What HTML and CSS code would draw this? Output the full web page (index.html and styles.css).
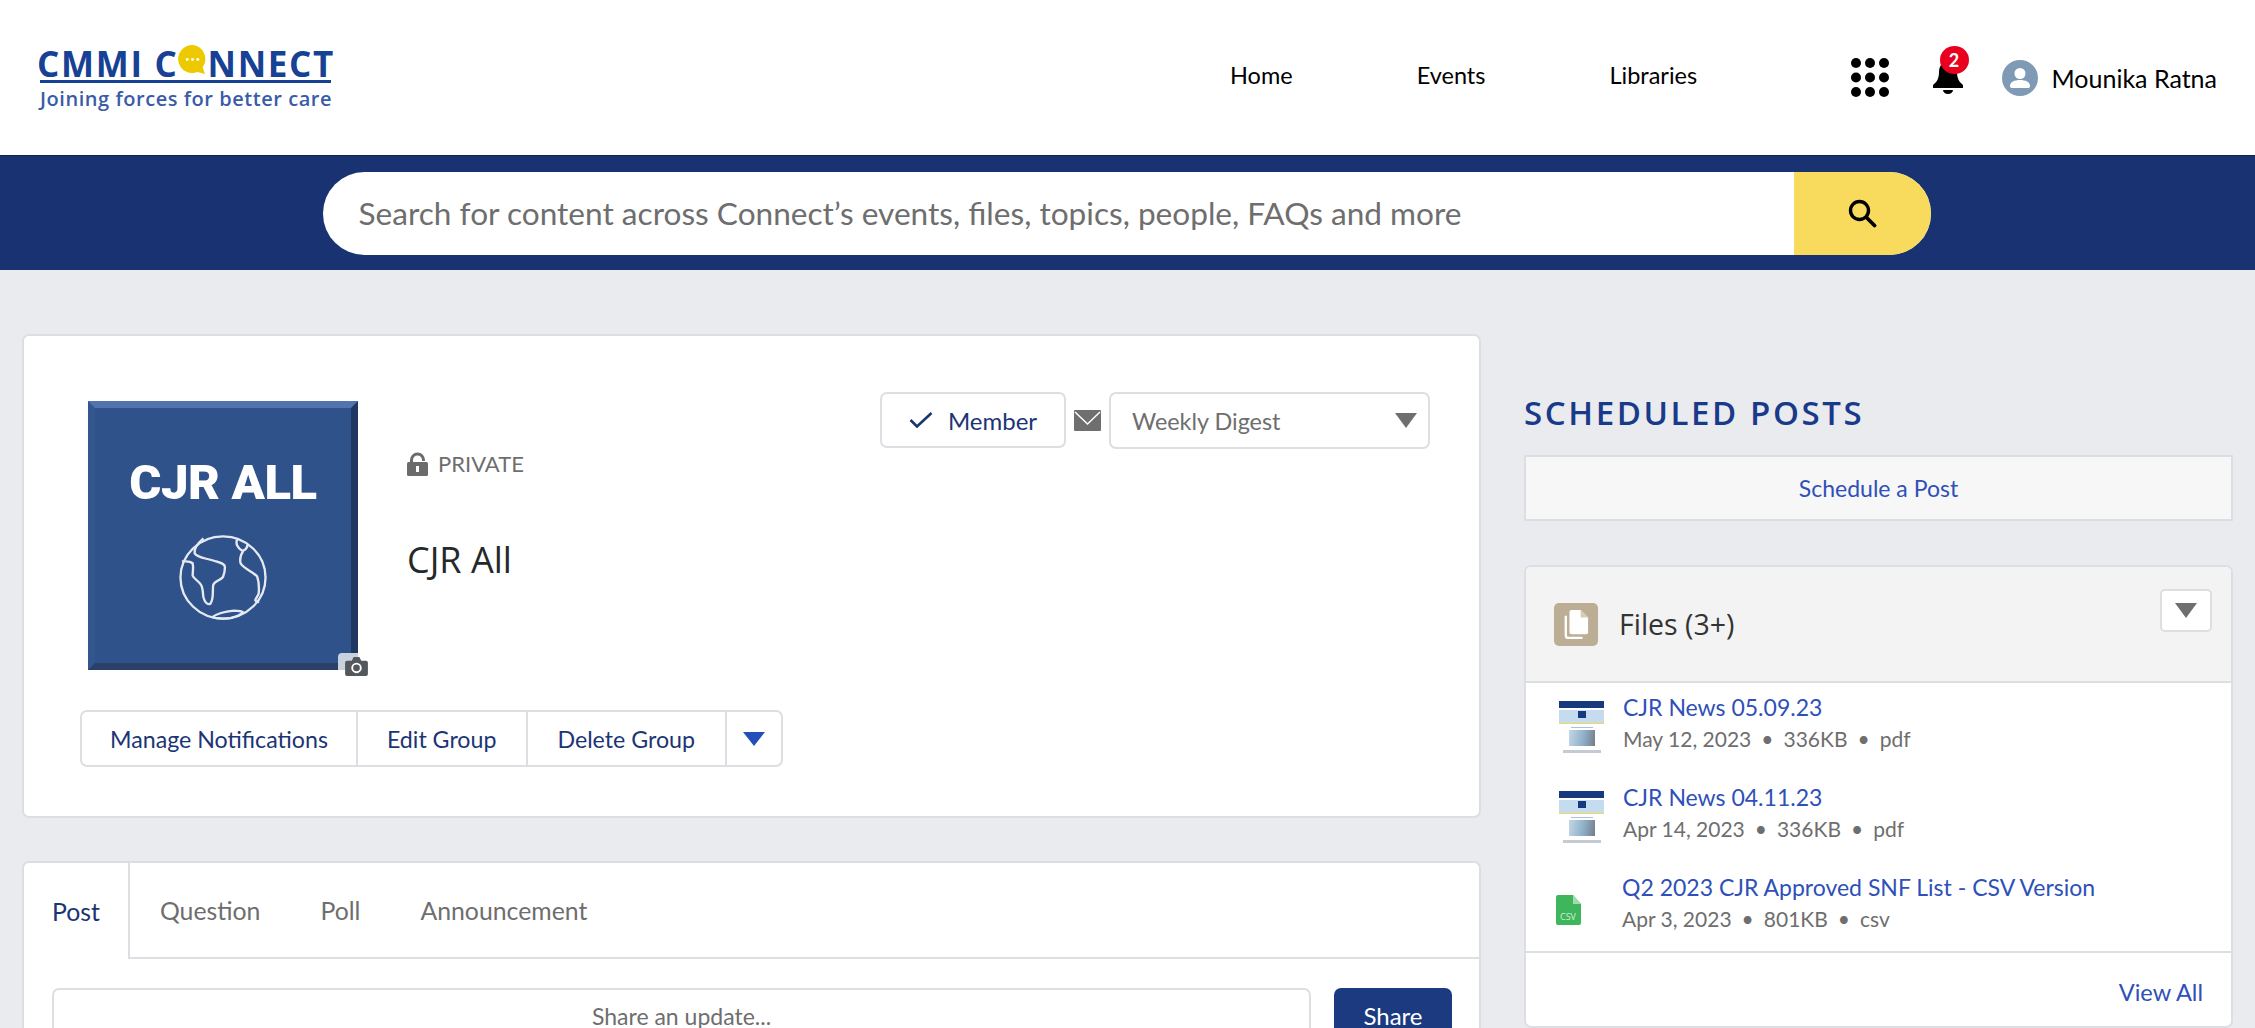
FILE: index.html
```html
<!DOCTYPE html>
<html lang="en">
<head>
  <meta charset="UTF-8">
  <title>CJR All | CMMI Connect</title>
  <link rel="stylesheet" href="styles.css">
</head>
<body>
  <header class="topbar">
    <a class="logo">
      <span class="logo-name">CMMI C<span class="logo-o"><svg viewBox="0 0 30 30" width="29" height="29"><path d="M15 0a14.500 14.500 0 1 0 5 28l8 2-2.500-7A14.500 14.500 0 0 0 15 0z" fill="#edc900"/><circle cx="9.500" cy="15" r="1.500" fill="#fff"/><circle cx="15" cy="15" r="1.500" fill="#fff"/><circle cx="20.500" cy="15" r="1.500" fill="#fff"/></svg></span>NNECT</span>
      <span class="logo-tag">Joining forces for better care</span>
    </a>
    <nav class="nav">
      <a>Home</a>
      <a>Events</a>
      <a>Libraries</a>
    </nav>
    <div class="tools">
      <svg class="waffle" viewBox="0 0 38 39" width="38" height="39">
        <g fill="#000">
          <circle cx="5" cy="5" r="5"/><circle cx="19" cy="5" r="5"/><circle cx="33" cy="5" r="5"/>
          <circle cx="5" cy="19.500" r="5"/><circle cx="19" cy="19.500" r="5"/><circle cx="33" cy="19.500" r="5"/>
          <circle cx="5" cy="34" r="5"/><circle cx="19" cy="34" r="5"/><circle cx="33" cy="34" r="5"/>
        </g>
      </svg>
      <span class="bell">
        <svg viewBox="0 0 30 33" width="30" height="33"><path d="M15 1c-6 0-9 4-9 10 0 6-2 10-6 13v3h30v-3c-4-3-6-7-6-13 0-6-3-10-9-10z" fill="#000"/><path d="M10 29h10c0 2-2 4-5 4s-5-2-5-4z" fill="#000"/></svg>
        <span class="badge">2</span>
      </span>
      <span class="user">
        <svg viewBox="0 0 36 36" width="36" height="36"><circle cx="18" cy="18" r="18" fill="#7f9ab5"/><circle cx="18" cy="13.500" r="5.500" fill="#fff"/><path d="M8 26c0-4 4.500-6 10-6s10 2 10 6c0 1.500-1 2-2 2H10c-1 0-2-.5-2-2z" fill="#fff"/></svg>
        Mounika Ratna
      </span>
    </div>
  </header>

  <div class="searchbar">
    <div class="search">
      <span class="search-text">Search for content across Connect’s events, files, topics, people, FAQs and more</span>
      <button class="search-btn">
        <svg viewBox="0 0 30 30" width="30" height="30"><circle cx="12.500" cy="12.500" r="9" fill="none" stroke="#000" stroke-width="3.400"/><path d="M19.500 19.500l8 8" stroke="#000" stroke-width="3.800" stroke-linecap="round"/></svg>
      </button>
    </div>
  </div>

  <main class="page">
    <section class="left">
      <div class="card group-card">
        <div class="group-top">
          <div class="group-pic">
            <div class="pic">
              <div class="pic-title">CJR ALL</div>
              <svg class="globe" viewBox="0 0 90 90" width="88" height="85" preserveAspectRatio="none" fill="none" stroke="#e4e9f2" stroke-width="2.400">
                <circle cx="45" cy="45" r="43.500"/>
                <path d="M25 3.500C20 8 15 14 16 19.500c3 5 12 5 19 7.500 6 2 12 3 12 7 0 5-1 8-2 10.500-3 4-9 4-10 8.500-1 6 1 14-3 20-4 1-6-3-7-7-1-5 0-10-3-14-3-4-7-6-8-9 0-5 1-8 0-13-3-3-7-2-11-2"/>
                <path d="M60 3.500c-2 4-1 7 0 8.500 2 4 5 5 7 4 3-2 3-4 3-6M66 16c-3 5-4 10-3 14 3 6 12 8 17 14 2 6 2 12 1.500 18-1 3-3 5-3.500 7 1 2 2 2 4 2"/>
                <path d="M34 87c5-4 12-6 22-7 4 0 8 0 10 2-4 3-8 5-13 6-7 1-13 1-19-1z"/>
              </svg>
            </div>
            <span class="cam-bg"></span>
            <svg class="cam" viewBox="0 0 24 20" width="23" height="19"><path d="M2 4h5l2-4h6l2 4h5a2 2 0 0 1 2 2v12a2 2 0 0 1-2 2H2a2 2 0 0 1-2-2V6a2 2 0 0 1 2-2z" fill="#54585c"/><circle cx="12" cy="11.500" r="4.500" fill="none" stroke="#fff" stroke-width="2"/></svg>
          </div>
          <div class="group-info">
            <div class="private">
              <svg viewBox="0 0 21 24" width="21" height="24"><path d="M4.500 11V8a6 6 0 0 1 12 0v1" fill="none" stroke="#6b6b6b" stroke-width="3"/><rect x="0" y="10" width="21" height="14" rx="1.500" fill="#6b6b6b"/><path d="M9 14h3v6H9z" fill="#fff"/></svg>
              PRIVATE
            </div>
            <h1 class="group-name">CJR All</h1>
          </div>
          <div class="member-row">
            <button class="btn member-btn">
              <svg viewBox="0 0 24 16" width="24" height="16"><path d="M1.500 8l6.500 6.500L22.500 1" fill="none" stroke="#1b3574" stroke-width="2.600"/></svg>
              Member
            </button>
            <svg class="mail" viewBox="0 0 27 21" width="27" height="21"><rect width="27" height="21" rx="1" fill="#6f6f6f"/><path d="M1 2l12.500 12L26 2" fill="none" stroke="#fff" stroke-width="1.500"/></svg>
            <div class="digest">
              <span>Weekly Digest</span>
              <span class="caret"></span>
            </div>
          </div>
        </div>
        <div class="btn-group">
          <a>Manage Notifications</a>
          <a>Edit Group</a>
          <a>Delete Group</a>
          <a class="more"><span class="caret caret-blue"></span></a>
        </div>
      </div>

      <div class="card post-card">
        <div class="tabs">
          <a class="tab active">Post</a>
          <a class="tab">Question</a>
          <a class="tab">Poll</a>
          <a class="tab">Announcement</a>
          <span class="tab-fill"></span>
        </div>
        <div class="share-row">
          <div class="share-box">Share an update...</div>
          <button class="share-btn">Share</button>
        </div>
      </div>
    </section>

    <aside class="right">
      <h2 class="side-title">SCHEDULED POSTS</h2>
      <a class="schedule">Schedule a Post</a>

      <div class="card files-card">
        <div class="files-head">
          <span class="files-icon">
            <svg viewBox="0 0 28 32" width="26" height="30"><path d="M9 1h10l8 8v16a2 2 0 0 1-2 2H9a2 2 0 0 1-2-2V3a2 2 0 0 1 2-2z" fill="#fff"/><path d="M19 1v8h8z" fill="#d8ccb5"/><path d="M3 7v21a3 3 0 0 0 3 3h15" fill="none" stroke="#fff" stroke-width="2.500"/></svg>
          </span>
          <span class="files-title">Files (3+)</span>
          <button class="files-menu"><span class="caret"></span></button>
        </div>
        <ul class="files">
          <li class="file">
            <div class="thumb">
              <div class="thumb-head"></div>
              <div class="thumb-band"><i></i></div>
              <div class="thumb-line"></div>
              <div class="thumb-pic"></div>
              <div class="thumb-foot"></div>
            </div>
            <div>
              <a class="file-name">CJR News 05.09.23</a>
              <div class="file-meta"><span>May 12, 2023</span><span>336KB</span><span>pdf</span></div>
            </div>
          </li>
          <li class="file">
            <div class="thumb">
              <div class="thumb-head"></div>
              <div class="thumb-band"><i></i></div>
              <div class="thumb-line"></div>
              <div class="thumb-pic"></div>
              <div class="thumb-foot"></div>
            </div>
            <div>
              <a class="file-name">CJR News 04.11.23</a>
              <div class="file-meta"><span>Apr 14, 2023</span><span>336KB</span><span>pdf</span></div>
            </div>
          </li>
          <li class="file">
            <div class="thumb-csv">
              <svg viewBox="0 0 25 30" width="25" height="30"><path d="M2 0h15l8 9v19a2 2 0 0 1-2 2H2a2 2 0 0 1-2-2V2a2 2 0 0 1 2-2z" fill="#3fb65b"/><path d="M17 0l8 9h-8z" fill="#9fdcae"/><text x="12" y="25" class="csv-label">CSV</text></svg>
            </div>
            <div>
              <a class="file-name">Q2 2023 CJR Approved SNF List - CSV Version</a>
              <div class="file-meta"><span>Apr 3, 2023</span><span>801KB</span><span>csv</span></div>
            </div>
          </li>
        </ul>
        <div class="files-foot"><a>View All</a></div>
      </div>
    </aside>
  </main>
</body>
</html>
```

FILE: styles.css
```css
* {
  box-sizing: border-box;
}

html,
body {
  height: 1028px;
  overflow: hidden;
}

body {
  margin: 0;
  background: #e9ebef;
  font-family: Lato, sans-serif;
  font-size: 23px;
  color: #000;
}

a {
  text-decoration: none;
}

button {
  font-family: inherit;
  cursor: pointer;
}

/* header */
.topbar {
  height: 155px;
  background: #fff;
  display: flex;
  align-items: center;
  padding: 0 38px 0 37px;
}

.logo {
  width: 298px;
  display: flex;
  flex-direction: column;
  font-family: "Open Sans", sans-serif;
  color: #164194;
}

.logo-name {
  display: flex;
  align-items: center;
  height: 39px;
  font-size: 35px;
  font-weight: 700;
  letter-spacing: 1.700px;
  white-space: nowrap;
  position: relative;
}

.logo-name::after {
  content: "";
  position: absolute;
  left: 3px;
  right: 4px;
  bottom: 0;
  height: 3px;
  background: #164194;
}

.logo-o {
  display: flex;
  margin-top: -7px;
}

.logo-tag {
  margin: 2px 0 0 3px;
  font-size: 20px;
  font-weight: 600;
  letter-spacing: 0.550px;
  color: #3a5ca8;
  white-space: nowrap;
}

.nav {
  margin-left: 895px;
  display: flex;
  gap: 124px;
  font-size: 23.500px;
}

.nav a {
  color: #000;
  margin-top: -6px;
}

.tools {
  margin-left: auto;
  display: flex;
  align-items: center;
}

.bell {
  position: relative;
  display: flex;
  margin-left: 44px;
}

.badge {
  position: absolute;
  top: -15px;
  left: 7px;
  width: 29px;
  height: 28px;
  border-radius: 50%;
  background: #ea001e;
  color: #fff;
  font-size: 18px;
  font-weight: 700;
  display: flex;
  align-items: center;
  justify-content: center;
}

.user {
  display: flex;
  align-items: center;
  gap: 14px;
  margin-left: 39px;
  font-size: 25px;
}

/* search */
.searchbar {
  height: 115px;
  background: #193372;
  border-top: 1px solid #10224f;
  display: flex;
  justify-content: center;
  align-items: center;
  padding-right: 2px;
}

.search {
  width: 1608px;
  height: 83px;
  background: #fff;
  border-radius: 42px;
  overflow: hidden;
  display: flex;
  align-items: center;
}

.search-text {
  flex: 1;
  padding-left: 36px;
  font-size: 31.600px;
  color: #6e6e6e;
}

.search-btn {
  width: 137px;
  height: 100%;
  border: none;
  background: #f8da5c;
  display: flex;
  align-items: center;
  justify-content: center;
  padding: 0;
}

/* page */
.page {
  height: 758px;
  overflow: hidden;
  display: flex;
  align-items: flex-start;
  padding: 64px 22px 0 22px;
}

.left {
  width: 1459px;
  flex-shrink: 0;
}

.card {
  background: #fff;
  border: 2px solid #dcdee2;
  border-radius: 7px;
}

.group-card {
  height: 484px;
  padding: 56px 49px 0 64px;
}

.group-top {
  display: flex;
  align-items: flex-start;
  height: 318px;
}

.group-pic {
  position: relative;
  width: 270px;
  height: 269px;
  margin-top: 9px;
  flex-shrink: 0;
}

.pic {
  width: 270px;
  height: 269px;
  background: #2f528b;
  border: 7px solid;
  border-color: #5273ad #1f3761 #2a4068 #33568f;
  display: flex;
  flex-direction: column;
  align-items: center;
  color: #fff;
}

.pic-title {
  margin-top: 47px;
  font-family: Roboto, sans-serif;
  font-weight: 900;
  font-size: 49px;
  letter-spacing: -0.4px;
  line-height: 56px;
  white-space: nowrap;
}

.globe {
  margin-top: 24px;
}

.cam-bg {
  position: absolute;
  right: 0;
  bottom: 0;
  width: 20px;
  height: 17px;
  background: #c9d1df;
  border-radius: 4px 0 0 0;
}

.cam {
  position: absolute;
  right: -10px;
  bottom: -6px;
}

.group-info {
  margin-left: 49px;
}

.private {
  margin-top: 60px;
  display: flex;
  align-items: center;
  gap: 10px;
  font-size: 22px;
  line-height: 24px;
  color: #6e6e6e;
}

.group-name {
  margin: 59px 0 0 0;
  font-family: "Open Sans", sans-serif;
  font-size: 36px;
  font-weight: 400;
  line-height: 50px;
  color: #26282a;
}

.member-row {
  margin-left: auto;
  display: flex;
  align-items: flex-start;
}

.btn {
  background: #fff;
  border: 2px solid #dcdee2;
  border-radius: 7px;
}

.member-btn {
  width: 186px;
  height: 56px;
  display: flex;
  align-items: center;
  justify-content: center;
  gap: 15px;
  font-size: 24px;
  color: #1b3574;
}

.mail {
  margin: 18px 8px 0;
}

.digest {
  width: 321px;
  height: 57px;
  border: 2px solid #dcdee2;
  border-radius: 7px;
  display: flex;
  align-items: center;
  justify-content: space-between;
  padding: 0 11px 0 21px;
  font-size: 23.400px;
  color: #6e6e6e;
}

.caret {
  width: 0;
  height: 0;
  border-left: 11px solid transparent;
  border-right: 11px solid transparent;
  border-top: 15px solid #6f6f6f;
}

.caret-blue {
  border-top-color: #2350b8;
  border-top-width: 14px;
}

.btn-group {
  display: inline-flex;
  height: 57px;
  border: 2px solid #dcdee2;
  border-radius: 7px;
  margin-left: -8px;
}

.btn-group a {
  display: flex;
  align-items: center;
  padding: 0 30px 0 29px;
  color: #1b3574;
  font-size: 23.200px;
  border-left: 2px solid #dcdee2;
}

.btn-group a:first-child {
  padding: 0 28px;
  border-left: none;
}

.btn-group .more {
  padding: 0 16px;
}

.post-card {
  margin-top: 43px;
  height: 167px;
  border-bottom: none;
  border-radius: 7px 7px 0 0;
}

.tabs {
  display: flex;
  height: 96px;
}

.tab {
  display: flex;
  align-items: center;
  padding: 0 30px;
  color: #6e6e6e;
  font-size: 24.800px;
  border-bottom: 2px solid #dcdee2;
}

.tab.active {
  padding: 0 28px;
  color: #1b3574;
  border-bottom: none;
  border-right: 2px solid #dcdee2;
}

.tab-fill {
  flex: 1;
  border-bottom: 2px solid #dcdee2;
}

.share-row {
  display: flex;
  gap: 23px;
  padding: 29px 27px 0 28px;
}

.share-box {
  flex: 1;
  height: 40px;
  padding-top: 15px;
  border: 2px solid #dcdee2;
  border-bottom: none;
  border-radius: 7px 7px 0 0;
  text-align: center;
  line-height: 23px;
  color: #6e6e6e;
  font-size: 23px;
}

.share-btn {
  width: 118px;
  height: 40px;
  padding: 16px 0 0;
  border: none;
  border-radius: 7px 7px 0 0;
  background: #1b3a80;
  color: #fff;
  line-height: 24px;
  font-size: 24px;
}

/* right column */
.right {
  margin-left: 43px;
  flex: 1;
}

.side-title {
  margin: 58px 0 0 0;
  font-family: "Open Sans", sans-serif;
  font-size: 33px;
  font-weight: 600;
  letter-spacing: 2.600px;
  line-height: 42px;
  white-space: nowrap;
  color: #193a8a;
}

.schedule {
  display: block;
  margin-top: 21px;
  height: 66px;
  background: #f7f7f7;
  border: 2px solid #dcdee2;
  text-align: center;
  line-height: 62px;
  color: #2e50b8;
}

.files-card {
  margin-top: 44px;
  height: 463px;
}

.files-head {
  height: 116px;
  background: #f3f3f3;
  border-bottom: 2px solid #dcdee2;
  display: flex;
  align-items: center;
  padding: 0 19px 0 28px;
  border-radius: 5px 5px 0 0;
}

.files-icon {
  width: 44px;
  height: 43px;
  background: #bcae94;
  border-radius: 5px;
  display: flex;
  align-items: center;
  justify-content: center;
}

.files-title {
  margin-left: 21px;
  font-family: "Open Sans", sans-serif;
  font-size: 28.500px;
  color: #333;
}

.files-menu {
  margin-left: auto;
  margin-top: -28px;
  width: 52px;
  height: 43px;
  background: #fff;
  border: 2px solid #dcdee2;
  border-radius: 5px;
  display: flex;
  align-items: center;
  justify-content: center;
  padding: 0;
}

.files {
  list-style: none;
  margin: 0;
  padding: 7px 0 0;
  height: 270px;
  border-bottom: 2px solid #dcdee2;
}

.file {
  display: flex;
  align-items: flex-start;
  height: 90px;
  padding-left: 33px;
}

.thumb {
  width: 45px;
  height: 53px;
  margin: 11px 19px 0 0;
  flex-shrink: 0;
  display: flex;
  flex-direction: column;
  background: #fff;
}

.thumb-head {
  height: 7px;
  background: #173a7e;
}

.thumb-band {
  height: 14px;
  margin-top: 2px;
  background: #c5dbf0;
  border-bottom: 1px solid #f6d94e;
  display: flex;
  justify-content: center;
}

.thumb-band i {
  width: 8px;
  height: 7px;
  margin-top: 1px;
  background: #173a7e;
}

.thumb-line {
  width: 22px;
  height: 1px;
  margin: 3px auto 0;
  background: #a9c0e6;
}

.thumb-pic {
  width: 26px;
  height: 16px;
  margin: 2px auto 0;
  background: linear-gradient(100deg, #c3d7e6, #8fb0c8 55%, #767b88);
}

.thumb-foot {
  width: 38px;
  height: 3px;
  margin: 4px auto 0;
  background: #c6cad4;
}

.thumb-csv {
  width: 25px;
  height: 30px;
  margin: 25px 41px 0 -3px;
  flex-shrink: 0;
}

.csv-label {
  font-family: "Open Sans", sans-serif;
  font-size: 9px;
  fill: #cfeed6;
  text-anchor: middle;
}

.file-name {
  display: block;
  color: #2e50b8;
  line-height: 34px;
  white-space: nowrap;
}

.file-meta {
  display: flex;
  line-height: 30px;
  font-size: 21px;
  color: #6e6e6e;
}

.file-meta span + span::before {
  content: "•";
  margin: 0 10px;
}

.files-foot {
  text-align: right;
  padding: 22px 28px 0 0;
  line-height: 34px;
  font-size: 23.600px;
}

.files-foot a {
  color: #2e50b8;
}
```
